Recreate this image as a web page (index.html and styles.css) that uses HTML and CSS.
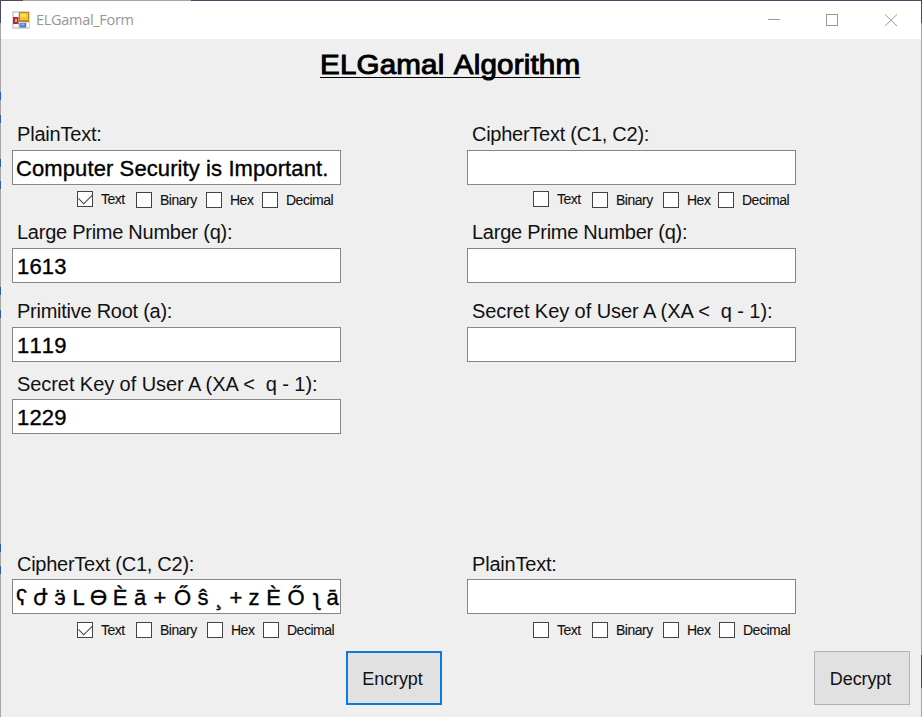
FILE: index.html
```html
<!DOCTYPE html>
<html lang="en">
<head>
<meta charset="utf-8">
<title>ELGamal_Form</title>
<link rel="stylesheet" href="styles.css">
</head>
<body>
<div class="window">
  <header class="titlebar">
    <svg class="app-icon" width="18" height="18" viewBox="0 0 18 18">
      <rect x="0" y="0" width="18" height="18" rx="1" fill="#d6d6d6"/>
      <path d="M2 2h4v4H2zM2 13h4v3H2zM15 12h2v4h-2z" fill="#fff"/>
      <rect x="7" y="1" width="10" height="10" fill="#b98a20"/>
      <rect x="8" y="2" width="8" height="7" fill="#f6c52e"/>
      <rect x="9" y="3" width="5" height="3" fill="#ffdc66"/>
      <rect x="1" y="6" width="5.500" height="7" fill="#b52a2a"/>
      <rect x="3" y="8" width="2" height="3" fill="#f09a90"/>
      <rect x="7.500" y="12" width="6.500" height="4.500" fill="#4179d4"/>
      <rect x="8.500" y="12.500" width="4" height="2" fill="#83b2f7"/>
    </svg>
    <span class="caption">ELGamal_Form</span>
    <svg class="controls" width="130" height="14" viewBox="0 0 130 14" fill="none" stroke="#999">
      <path d="M0 6.500h12"/>
      <rect x="58.500" y="1.500" width="11" height="11"/>
      <path d="M117 1.500l12 11.500M129 1.500L117 13"/>
    </svg>
  </header>
  <main>
    <h1><span>ELGamal Algorithm</span></h1>
    <div class="columns">
      <section class="column">
        <div class="field">
          <div class="label plain">PlainText:</div>
          <div class="box sentence">Computer Security is Important.</div>
          <div class="options raised">
            <div class="option"><i class="check on"></i><span>Text</span></div>
            <div class="option"><i class="check"></i><span>Binary</span></div>
            <div class="option"><i class="check"></i><span>Hex</span></div>
            <div class="option"><i class="check"></i><span>Decimal</span></div>
          </div>
        </div>
        <div class="field prime">
          <div class="label">Large Prime Number (q):</div>
          <div class="box">1613</div>
        </div>
        <div class="field root">
          <div class="label">Primitive Root (a):</div>
          <div class="box">1119</div>
        </div>
        <div class="field secret tight">
          <div class="label key">Secret Key of User A (XA &lt;&nbsp; q - 1):</div>
          <div class="box">1229</div>
        </div>
        <div class="field result tight">
          <div class="label">CipherText (C1, C2):</div>
          <div class="box cipher"><span>ʕ</span><span>ժ</span><span>ӭ</span><span>L</span><span>Ө</span><span>È</span><span>ā</span><span>+</span><span>Ő</span><span>ŝ</span><span>¸</span><span>+</span><span>z</span><span>È</span><span>Ő</span><span>ʅ</span><span>ā</span></div>
          <div class="options lower">
            <div class="option"><i class="check on"></i><span>Text</span></div>
            <div class="option"><i class="check"></i><span>Binary</span></div>
            <div class="option"><i class="check"></i><span>Hex</span></div>
            <div class="option"><i class="check"></i><span>Decimal</span></div>
          </div>
        </div>
      </section>
      <section class="column">
        <div class="field">
          <div class="label">CipherText (C1, C2):</div>
          <div class="box"></div>
          <div class="options raised right">
            <div class="option"><i class="check"></i><span>Text</span></div>
            <div class="option"><i class="check"></i><span>Binary</span></div>
            <div class="option"><i class="check"></i><span>Hex</span></div>
            <div class="option"><i class="check"></i><span>Decimal</span></div>
          </div>
        </div>
        <div class="field prime">
          <div class="label">Large Prime Number (q):</div>
          <div class="box"></div>
        </div>
        <div class="field root">
          <div class="label key">Secret Key of User A (XA &lt;&nbsp; q - 1):</div>
          <div class="box"></div>
        </div>
        <div class="field output tight">
          <div class="label plain">PlainText:</div>
          <div class="box"></div>
          <div class="options right lower">
            <div class="option"><i class="check"></i><span>Text</span></div>
            <div class="option"><i class="check"></i><span>Binary</span></div>
            <div class="option"><i class="check"></i><span>Hex</span></div>
            <div class="option"><i class="check"></i><span>Decimal</span></div>
          </div>
        </div>
      </section>
    </div>
    <footer>
      <button class="primary">Encrypt</button>
      <button>Decrypt</button>
    </footer>
  </main>
</div>
</body>
</html>
```
FILE: styles.css
```css
* { box-sizing: border-box; }
body {
  margin: 0;
  height: 717px;
  overflow: hidden;
  padding: 1px 1px 0;
  font-family: "Liberation Sans", Arial, sans-serif;
  color: #111;
  background:
    linear-gradient(90deg, #454b60 23px, #a6a6a6 23px 191px, #454b60 191px) 0 0 / 100% 1px no-repeat,
    linear-gradient(#454b60 23px, #a6a6a6 23px 92px, #2a5db0 92px 100px, #a6a6a6 100px 115px, #2a5db0 115px 123px, #a6a6a6 123px 159px, #2a5db0 159px 167px, #a6a6a6 167px 181px, #2a5db0 181px 189px, #a6a6a6 189px 287px, #2a5db0 287px 295px, #a6a6a6 295px 310px, #2a5db0 310px 318px, #a6a6a6 318px 544px, #2a5db0 544px 552px, #a6a6a6 552px 566px, #2a5db0 566px 574px, #a6a6a6 574px) 0 0 / 1px 100% no-repeat,
    linear-gradient(#454b60 23px, #a6a6a6 23px 655px, #454b60 655px 688px, #a6a6a6 688px) 100% 0 / 1px 100% no-repeat;
}
.window { height: 716px; background: #efefef; }
.titlebar {
  display: flex;
  align-items: center;
  height: 38px;
  padding: 0 23px 0 11px;
  background: #fff;
}
.caption {
  margin-left: 6px;
  font: 14.5px/20px "Open Sans", sans-serif;
  letter-spacing: -0.3px;
  color: #969696;
}
.controls { margin-left: auto; }
h1 {
  margin: 0;
  height: 83px;
  padding: 9px 0 0 319px;
  font-size: 27px;
  line-height: 34px;
  font-weight: 400;
  color: #000;
  -webkit-text-stroke: 0.95px #000;
  white-space: nowrap;
}
h1 span {
  display: inline-block;
  letter-spacing: 0.15px;
  word-spacing: 2.5px;
  transform: scaleX(1.095);
  transform-origin: 0 0;
  text-decoration: underline 1px;
  text-underline-offset: 3px;
  text-decoration-skip-ink: none;
}
.columns { display: flex; gap: 126px; height: 529px; padding-left: 11px; }
.column { width: 329px; }
.prime { margin-top: 12px; }
.root { margin-top: 16px; }
.secret { margin-top: 10px; }
.result { margin-top: 118px; }
.output { margin-top: 190px; }
.label {
  height: 28px;
  padding-left: 5px;
  font-size: 20px;
  line-height: 25px;
  letter-spacing: -0.26px;
  white-space: nowrap;
}
.tight .label { height: 27px; line-height: 25px; }
.plain { letter-spacing: -0.2px; }
.key { letter-spacing: -0.07px; }
.box {
  height: 35px;
  padding: 1px 4px 0;
  border: 1px solid #868686;
  background: #fff;
  color: #000;
  font-size: 22px;
  line-height: 34px;
  -webkit-text-stroke: 0.35px #000;
  letter-spacing: 0.2px;
  font-kerning: none;
  overflow: hidden;
  white-space: nowrap;
}
.sentence { padding-left: 3px; letter-spacing: 0.1px; }
.cipher {
  display: grid;
  padding-left: 0;
  padding-right: 0;
  grid-template-columns: 17px 20px 20px 17px 23px 20px 20px 20px 25px 16px 16px 18px 18px 21px 24px 18px 13px;
  text-align: center;
  letter-spacing: 0;
}
.options {
  display: grid;
  grid-template-columns: 59px 70px 56px auto;
  height: 23px;
  padding: 7px 0 0 65px;
}
.options.right { grid-template-columns: 59px 71px 55px auto; padding-left: 66px; }
.options.lower { grid-template-columns: 59px 71px 56px auto; padding-top: 8px; }
.option { display: flex; height: 16px; align-items: center; gap: 8px; font-size: 14px; letter-spacing: -0.5px; }
.option span { line-height: 16px; -webkit-text-stroke: 0.1px #111; }
.raised .option:first-child { margin-top: -1px; }
.check { position: relative; flex: none; width: 16px; height: 16px; border: 1px solid #444; background: #fff; }
.on::after {
  content: "";
  position: absolute;
  left: 1px;
  top: 2px;
  width: 12px;
  height: 7px;
  border: solid #444;
  border-width: 0 0 1.5px 1.5px;
  transform: translateY(-1px) rotate(-45deg);
}
footer { display: flex; justify-content: space-between; padding: 0 11px 0 345px; }
button {
  width: 96px;
  height: 54px;
  padding: 2px 3px 0 0;
  border: 1px solid #b3b3b3;
  background: #e1e1e1;
  color: #111;
  font: 18px "Liberation Sans", Arial, sans-serif;
  letter-spacing: -0.1px;
}
.primary { border: 2px solid #0a7bdb; }
```
